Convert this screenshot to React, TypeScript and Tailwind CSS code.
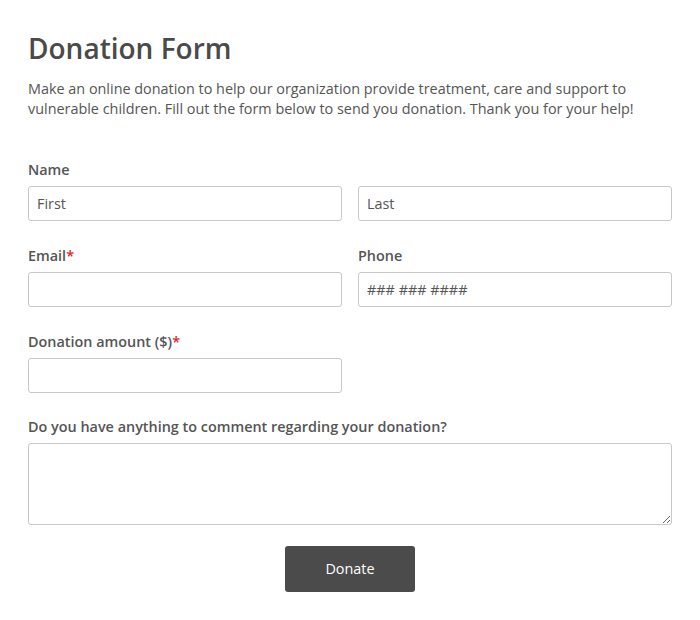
import React from "react";

const font = { fontFamily: '"Open Sans", Arial, sans-serif' };

function Label({ text, required }: { text: string; required?: boolean }) {
  return (
    <label className="block text-[14.4px] leading-[20px] font-semibold text-[#555] mb-[6px]">
      {text}
      {required && <span className="text-[#e0262b]">*</span>}
    </label>
  );
}

const inputCls =
  "w-full h-[35px] border border-[#c8c8c8] rounded-[3px] px-[8px] text-[14.4px] text-[#555] placeholder:text-[#555] outline-none bg-white";

export default function App() {
  return (
    <div className="min-h-[620px] bg-white px-[28px] pt-[30px]" style={font}>
      <h1 className="text-[28px] leading-[36px] font-semibold text-[#4a4a4a]">Donation Form</h1>
      <p className="mt-[13px] text-[14.4px] leading-[19.5px] text-[#555]">
        Make an online donation to help our organization provide treatment, care and support to
        vulnerable children. Fill out the form below to send you donation. Thank you for your help!
      </p>

      <form className="mt-[42px]" onSubmit={e => e.preventDefault()}>
        <div className="mb-[25px]">
          <Label text="Name" />
          <div className="grid grid-cols-2 gap-[16px]">
            <input className={inputCls} placeholder="First" />
            <input className={inputCls} placeholder="Last" />
          </div>
        </div>

        <div className="grid grid-cols-2 gap-[16px] mb-[25px]">
          <div>
            <Label text="Email" required />
            <input className={inputCls} />
          </div>
          <div>
            <Label text="Phone" />
            <input className={inputCls} placeholder="### ### ####" />
          </div>
        </div>

        <div className="grid grid-cols-2 gap-[16px] mb-[24px]">
          <div>
            <Label text="Donation amount ($)" required />
            <input className={inputCls} />
          </div>
        </div>

        <div>
          <Label text="Do you have anything to comment regarding your donation?" />
          <textarea className="block w-full h-[82px] border border-[#c8c8c8] rounded-[3px] px-[8px] py-[6px] text-[14px] text-[#555] outline-none" />
        </div>

        <div className="flex justify-center mt-[21px]">
          <button
            type="submit"
            className="w-[130px] h-[46px] bg-[#4b4b4b] text-white text-[14.4px] rounded-[3px]"
          >
            Donate
          </button>
        </div>
      </form>
    </div>
  );
}
